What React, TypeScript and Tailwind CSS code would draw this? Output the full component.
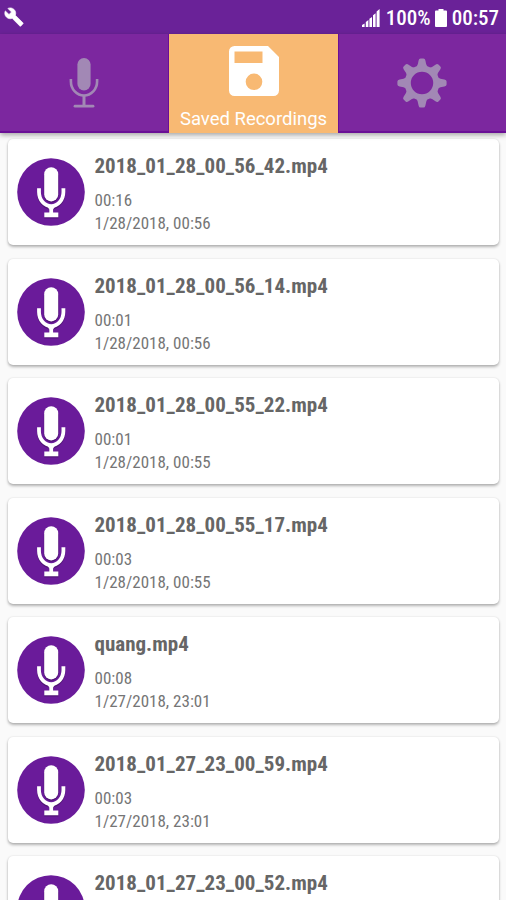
interface Recording {
  name: string;
  duration?: string;
  date?: string;
}

const recordings: Recording[] = [
  { name: '2018_01_28_00_56_42.mp4', duration: '00:16', date: '1/28/2018, 00:56' },
  { name: '2018_01_28_00_56_14.mp4', duration: '00:01', date: '1/28/2018, 00:56' },
  { name: '2018_01_28_00_55_22.mp4', duration: '00:01', date: '1/28/2018, 00:55' },
  { name: '2018_01_28_00_55_17.mp4', duration: '00:03', date: '1/28/2018, 00:55' },
  { name: 'quang.mp4', duration: '00:08', date: '1/27/2018, 23:01' },
  { name: '2018_01_27_23_00_59.mp4', duration: '00:03', date: '1/27/2018, 23:01' },
  { name: '2018_01_27_23_00_52.mp4' },
];

const toothAngles = [0, 45, 90, 135, 180, 225, 270, 315];

function MicTabIcon() {
  return (
    <svg width="30" height="52" viewBox="0 0 30 52" fill="none" stroke="#a288b5">
      <rect x="8.4" y="1" width="13.2" height="32.4" rx="6.6" fill="#a288b5" stroke="none" />
      <path d="M1.9 22v2.5a13.1 14 0 0 0 26.2 0V22" strokeWidth="2.6" />
      <path d="M15 38.5V49" strokeWidth="3" />
      <path d="M6 49.2h18" strokeWidth="2.8" strokeLinecap="round" />
    </svg>
  );
}

function SaveIcon() {
  return (
    <svg width="50" height="50" viewBox="0 0 50 50" fill="white" fillRule="evenodd">
      <path d="M5.5 0H39L50 11V44.5A5.5 5.5 0 0 1 44.5 50H5.5A5.5 5.5 0 0 1 0 44.5V5.5A5.5 5.5 0 0 1 5.5 0ZM5.5 5.5V17H33.5V5.5ZM25 27.5A8.3 8.3 0 1 0 25 44.1A8.3 8.3 0 1 0 25 27.5Z" />
    </svg>
  );
}

function GearIcon() {
  return (
    <svg width="50" height="50" viewBox="-25 -25 50 50">
      <circle r="14.3" fill="none" stroke="#a288b5" strokeWidth="6.2" />
      {toothAngles.map((angle) => (
        <path
          key={angle}
          d="M-5.8 -15.5Q-3.8 -18 -3.4 -22.4Q-3.1 -24.6 -1.4 -24.6H1.4Q3.1 -24.6 3.4 -22.4Q3.8 -18 5.8 -15.5Z"
          fill="#a288b5"
          transform={`rotate(${angle})`}
        />
      ))}
    </svg>
  );
}

function RecordingIcon() {
  return (
    <svg className="shrink-0" width="68" height="68" viewBox="0 0 68 68" fill="none">
      <circle cx="34" cy="34" r="33.8" fill="#6a1b9a" />
      <g transform="translate(0 1.2)" opacity="0.55">
        <path d="M22 30.3V34a12.2 14.2 0 0 0 24.4 0V30.3" stroke="#3d1059" strokeWidth="4" />
        <path d="M31.7 49h5l-1 5.5h5.6v4.8h-14v-4.8h5.4z" fill="#3d1059" />
        <rect x="26.8" y="9.3" width="14.8" height="34.2" rx="7.4" fill="#3d1059" />
      </g>
      <path d="M22 30.3V34a12.2 14.2 0 0 0 24.4 0V30.3" stroke="white" strokeWidth="3.8" />
      <path d="M30.7 49h7l-1.6 2.5v3h5.2v4.7h-14v-4.7h5v-3z" fill="white" />
      <rect x="27.2" y="9.2" width="14" height="34.2" rx="7" fill="white" />
    </svg>
  );
}

function StatusBar() {
  return (
    <div className="flex h-[34px] items-center justify-between bg-[#6a2298] pr-[7px] pl-1 text-white">
      <svg className="-mt-px" width="20" height="20" viewBox="0 0 24 24" fill="white" stroke="white" strokeWidth="0.8">
        <path d="M22.7 19l-9.1-9.1c.9-2.3.4-5-1.5-6.9-2-2-5-2.4-7.4-1.3L9 6 6 9 1.6 4.7C.4 7.1.9 10.1 2.9 12.1c1.9 1.9 4.6 2.4 6.9 1.5l9.1 9.1c.4.4 1 .4 1.4 0l2.3-2.3c.5-.4.5-1.1.1-1.4z" />
      </svg>
      <div className="flex items-center pt-0.5 font-['Roboto_Condensed',Roboto,sans-serif] text-[21px] leading-none font-medium">
        <svg width="18" height="18" viewBox="0 0 18 18" fill="white">
          <path d="M0 18v-2l2.6-1.6V18zM3.8 18v-5l2.6-1.9V18zM7.4 18V9.8L10 8v10zM11 18V6.2l2.6-2V18zM14.6 18V2.4L17.6 0v18z" />
        </svg>
        <span className="ml-1.5">100%</span>
        <svg className="ml-1" width="12" height="18" viewBox="0 0 12 18" fill="white">
          <path d="M3.5 0h5v1.6H11a1 1 0 0 1 1 1V17a1 1 0 0 1-1 1H1a1 1 0 0 1-1-1V2.600a1 1 0 0 1 1-1h2.500z" />
        </svg>
        <span className="ml-[5px]">00:57</span>
      </div>
    </div>
  );
}

function TabBar() {
  return (
    <div className="relative flex h-[99px] border-b-2 border-[#6a0f96] bg-[#7c279f] shadow-[0_2px_5px_rgba(0,0,0,0.35)]">
      <button className="flex w-[169px] items-center justify-center border-r border-[#6a0f96] pt-px">
        <MicTabIcon />
      </button>
      <button className="-mb-0.5 flex w-[169px] flex-col items-center bg-[#f8b973] pt-3 text-white">
        <SaveIcon />
        <span className="mt-3 whitespace-nowrap text-[18.5px] leading-[22px]">Saved Recordings</span>
      </button>
      <button className="flex flex-1 items-center justify-center border-l border-[#6a0f96] pt-px pr-px">
        <GearIcon />
      </button>
    </div>
  );
}

function RecordingCard({ recording }: { recording: Recording }) {
  return (
    <div className="flex h-[106px] shrink-0 items-center rounded-[5px] bg-white pl-[9.5px] shadow-[0_2px_3px_rgba(0,0,0,0.28),0_0_2px_rgba(0,0,0,0.12)]">
      <RecordingIcon />
      <div className="ml-[9.5px] self-start pt-3.5 font-['Roboto_Condensed',Roboto,sans-serif] text-[#757575]">
        <p className="text-[21px] leading-[26px] font-bold text-[#666666]">{recording.name}</p>
        {recording.duration && <p className="mt-2.5 text-[17px] leading-[23px]">{recording.duration}</p>}
        {recording.date && <p className="text-[17px] leading-[23px]">{recording.date}</p>}
      </div>
    </div>
  );
}

export default function App() {
  return (
    <div className="flex h-[900px] w-[506px] flex-col overflow-hidden bg-[#fafafa] font-[Roboto,sans-serif]">
      <StatusBar />
      <TabBar />
      <div className="flex min-h-0 flex-1 flex-col gap-[13.5px] overflow-hidden px-[7.5px] pt-1.5">
        {recordings.map((recording) => (
          <RecordingCard key={recording.name} recording={recording} />
        ))}
      </div>
    </div>
  );
}
